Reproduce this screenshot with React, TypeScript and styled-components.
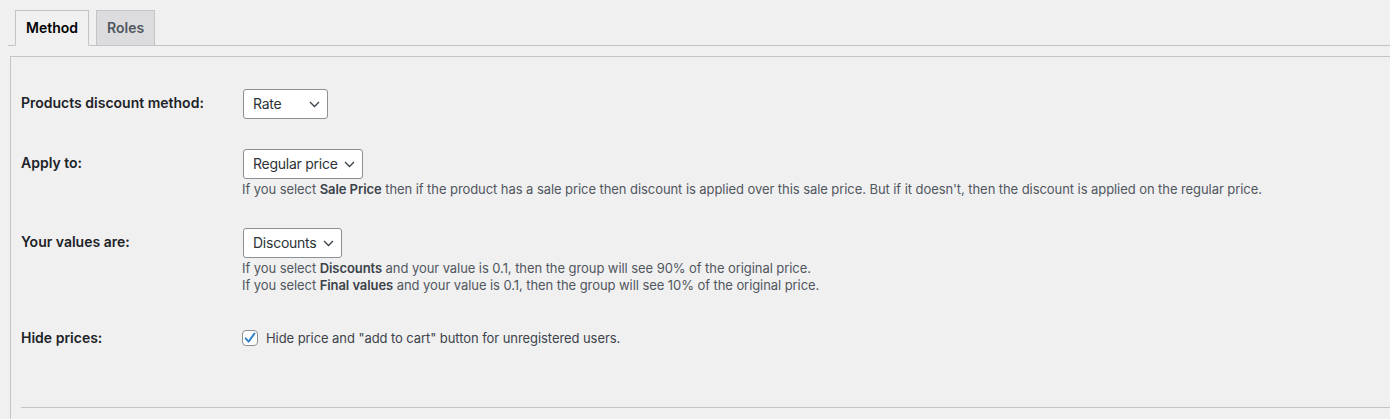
import React from "react";
import styled, { createGlobalStyle } from "styled-components";

const GlobalStyle = createGlobalStyle`
  html, body {
    margin: 0;
    padding: 0;
    background: #f0f0f1;
    overflow: hidden;
  }
  body {
    font-family: Inter, "Noto Sans", "Liberation Sans", sans-serif;
    color: #1d2327;
    font-size: 13px;
  }
  * { box-sizing: border-box; }
`;

const Page = styled.div`
  padding: 10px 0 0 8px;
  width: calc(100vw + 40px);
`;

const TabBar = styled.nav`
  display: flex;
  gap: 7px;
  padding-left: 7px;
  border-bottom: 1px solid #c3c4c7;
`;

const Tab = styled.button<{ $active?: boolean }>`
  font-family: inherit;
  font-size: 14px;
  font-weight: 600;
  line-height: 24px;
  padding: 5px 10px;
  margin-bottom: -1px;
  border: 1px solid #c3c4c7;
  border-bottom-color: ${(p) => (p.$active ? "#f0f0f1" : "#c3c4c7")};
  background: ${(p) => (p.$active ? "#f0f0f1" : "#dcdcde")};
  color: ${(p) => (p.$active ? "#000" : "#50575e")};
  cursor: pointer;
`;

const Panel = styled.section`
  margin: 10px 0 0 2px;
  border: 1px solid #c3c4c7;
  border-right: none;
  border-bottom: none;
  padding: 17px 0 0 10px;
  height: 363px;
`;

const Table = styled.div`
  display: grid;
  grid-template-columns: 221px 1fr;
`;

const Label = styled.div`
  font-size: 14px;
  font-weight: 600;
  line-height: 1.3;
  padding: 20px 10px 20px 0;
  color: #1d2327;
`;

const Cell = styled.div`
  padding: 15px 10px 15px 0;
  display: flex;
  flex-direction: column;
  align-items: flex-start;
`;

const SelectWrap = styled.div`
  position: relative;
  display: inline-flex;
  margin-left: 1px;
`;

const Select = styled.select<{ $w: number }>`
  appearance: none;
  -webkit-appearance: none;
  font-family: inherit;
  font-size: 14px;
  letter-spacing: -0.25px;
  color: #2c3338;
  height: 30px;
  width: ${(p) => p.$w}px;
  padding: 0 20px 0 9px;
  border: 1px solid #8c8f94;
  border-radius: 3px;
  background: #fff;
  line-height: 28px;
`;

const Chevron = styled.svg`
  position: absolute;
  right: 8px;
  top: 12px;
  width: 11px;
  height: 7px;
  pointer-events: none;
`;

const Description = styled.p`
  margin: 2px 0 0;
  font-size: 13px;
  letter-spacing: -0.07px;
  line-height: 17px;
  color: #50575e;
  b { font-weight: 600; color: #3c434a; }
`;

const CheckRow = styled.label`
  display: flex;
  align-items: center;
  gap: 8px;
  margin-top: 6px;
  font-size: 13px;
  letter-spacing: -0.07px;
  color: #3c434a;
  line-height: 16px;
`;

const CheckBox = styled.span`
  width: 16px;
  height: 16px;
  border: 1px solid #8c8f94;
  border-radius: 4px;
  background: #fff;
  display: inline-flex;
  align-items: center;
  justify-content: center;
`;

const Divider = styled.hr`
  margin: 40px 0 0 0;
  border: none;
  border-top: 1px solid #c3c4c7;
`;

function DropDown({ value, options, width }: { value: string; options: string[]; width: number }) {
  return (
    <SelectWrap>
      <Select $w={width} defaultValue={value}>
        {options.map((o) => (
          <option key={o}>{o}</option>
        ))}
      </Select>
      <Chevron viewBox="0 0 11 7">
        <polyline points="1,1 5.5,5.5 10,1" fill="none" stroke="#3c434a" strokeWidth="1.3" />
      </Chevron>
    </SelectWrap>
  );
}

export default function App() {
  return (
    <>
      <GlobalStyle />
      <Page>
        <TabBar>
          <Tab $active>Method</Tab>
          <Tab>Roles</Tab>
        </TabBar>
        <Panel>
          <Table>
            <Label>Products discount method:</Label>
            <Cell>
              <DropDown value="Rate" options={["Rate", "Fixed"]} width={85} />
            </Cell>

            <Label>Apply to:</Label>
            <Cell>
              <DropDown value="Regular price" options={["Regular price", "Sale price"]} width={120} />
              <Description>
                If you select <b>Sale Price</b> then if the product has a sale price then discount is applied over this sale price. But if it doesn't, then the discount is applied on the regular price.
              </Description>
            </Cell>

            <Label>Your values are:</Label>
            <Cell>
              <DropDown value="Discounts" options={["Discounts", "Final values"]} width={99} />
              <Description>
                If you select <b>Discounts</b> and your value is 0.1, then the group will see 90% of the original price.
                <br />
                If you select <b>Final values</b> and your value is 0.1, then the group will see 10% of the original price.
              </Description>
            </Cell>

            <Label>Hide prices:</Label>
            <Cell>
              <CheckRow>
                <CheckBox>
                  <svg width="14" height="14" viewBox="0 0 14 14">
                    <path d="M2.6 7.4 L5.6 10.6 L11.4 2.6" fill="none" stroke="#3582c4" strokeWidth="2" strokeLinecap="round" strokeLinejoin="round" />
                  </svg>
                </CheckBox>
                Hide price and "add to cart" button for unregistered users.
              </CheckRow>
            </Cell>
          </Table>
          <Divider />
        </Panel>
      </Page>
    </>
  );
}
